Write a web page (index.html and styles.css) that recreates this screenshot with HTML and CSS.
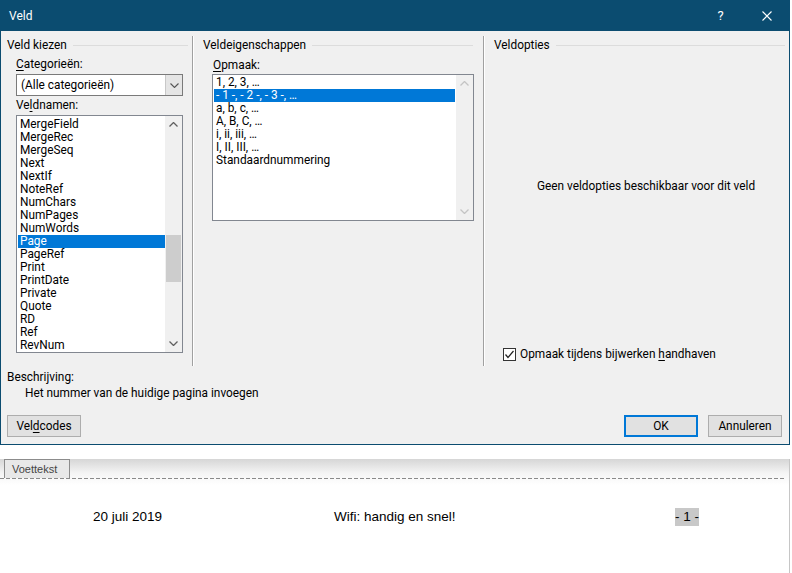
FILE: index.html
```html
<!DOCTYPE html>
<html lang="nl">
<head>
<meta charset="utf-8">
<title>Veld</title>
<link rel="stylesheet" href="styles.css">
</head>
<body>
<div class="dialog">
  <div class="titlebar">
    <span class="title">Veld</span>
    <span class="help">?</span>
    <span class="close"><svg width="10" height="10" viewBox="0 0 10 10"><path d="M0.5 0.5L9.5 9.5M9.5 0.5L0.5 9.5" stroke="#fff" stroke-width="1.1" fill="none"/></svg></span>
  </div>
  <div class="body">
    <div class="cols">
      <section class="col col1">
        <div class="group-title"><span>Veld kiezen</span></div>
        <div class="label lab-cat"><u>C</u>ategorieën:</div>
        <div class="combo">
          <span class="combo-text">(Alle categorieën)</span>
          <span class="combo-btn"><svg width="9" height="5" viewBox="0 0 9 5"><polyline points="0.5,0.5 4.5,4.5 8.5,0.5" fill="none" stroke="#555" stroke-width="1.1"/></svg></span>
        </div>
        <div class="label lab-names">Ve<u>l</u>dnamen:</div>
        <div class="listbox names">
          <div class="items">
            <div class="item">MergeField</div>
            <div class="item">MergeRec</div>
            <div class="item">MergeSeq</div>
            <div class="item">Next</div>
            <div class="item">NextIf</div>
            <div class="item">NoteRef</div>
            <div class="item">NumChars</div>
            <div class="item">NumPages</div>
            <div class="item">NumWords</div>
            <div class="item sel">Page</div>
            <div class="item">PageRef</div>
            <div class="item">Print</div>
            <div class="item">PrintDate</div>
            <div class="item">Private</div>
            <div class="item">Quote</div>
            <div class="item">RD</div>
            <div class="item">Ref</div>
            <div class="item">RevNum</div>
          </div>
          <div class="scrollbar">
            <span class="arrow"><svg width="9" height="5" viewBox="0 0 9 5"><polyline points="0.5,4.5 4.5,0.5 8.5,4.5" fill="none" stroke="#606060" stroke-width="1.3"/></svg></span>
            <span class="thumb"></span>
            <span class="arrow bottom"><svg width="9" height="5" viewBox="0 0 9 5"><polyline points="0.5,0.5 4.5,4.5 8.5,0.5" fill="none" stroke="#606060" stroke-width="1.3"/></svg></span>
          </div>
        </div>
      </section>
      <section class="col col2">
        <div class="group-title"><span>Veldeigenschappen</span></div>
        <div class="label lab-fmt"><u>O</u>pmaak:</div>
        <div class="listbox formats">
          <div class="items">
            <div class="item">1, 2, 3, …</div>
            <div class="item sel">- 1 -, - 2 -, - 3 -, …</div>
            <div class="item">a, b, c, …</div>
            <div class="item">A, B, C, …</div>
            <div class="item">i, ii, iii, …</div>
            <div class="item">I, II, III, …</div>
            <div class="item">Standaardnummering</div>
          </div>
          <div class="scrollbar disabled">
            <span class="arrow"><svg width="9" height="5" viewBox="0 0 9 5"><polyline points="0.5,4.5 4.5,0.5 8.5,4.5" fill="none" stroke="#c4c4c4" stroke-width="1.3"/></svg></span>
            <span class="arrow bottom"><svg width="9" height="5" viewBox="0 0 9 5"><polyline points="0.5,0.5 4.5,4.5 8.5,0.5" fill="none" stroke="#c4c4c4" stroke-width="1.3"/></svg></span>
          </div>
        </div>
      </section>
      <section class="col col3">
        <div class="group-title"><span>Veldopties</span></div>
        <div class="msg">Geen veldopties beschikbaar voor dit veld</div>
        <label class="check-row">
          <span class="checkbox"><svg width="11" height="11" viewBox="0 0 11 11"><polyline points="1.5,5.5 4,8.5 9.5,2" fill="none" stroke="#222" stroke-width="1.2"/></svg></span>
          <span>Opmaak tijdens bijwerken <u>h</u>andhaven</span>
        </label>
      </section>
    </div>
    <div class="desc">
      <div class="line">Beschrijving:</div>
      <div class="line indent">Het nummer van de huidige pagina invoegen</div>
    </div>
    <div class="buttons">
      <span class="btn">Vel<u>d</u>codes</span>
      <span class="spacer"></span>
      <span class="btn default">OK</span>
      <span class="btn">Annuleren</span>
    </div>
  </div>
</div>
<div class="doc">
  <div class="tab">Voettekst</div>
  <div class="dash"></div>
  <div class="footer">
    <span>20 juli 2019</span>
    <span>Wifi: handig en snel!</span>
    <span><span class="field">- 1 -</span></span>
  </div>
</div>
</body>
</html>
```

FILE: styles.css
```css
* { box-sizing: border-box; }
html, body { margin: 0; padding: 0; }
body {
  width: 792px;
  height: 573px;
  overflow: hidden;
  background: #fff;
  font-family: Roboto, "Segoe UI", "Noto Sans", sans-serif;
  font-size: 11.85px;
  color: #000;
}
u { text-decoration: underline; text-underline-offset: 2px; }

.dialog {
  width: 790px;
  height: 445px;
  border: 1px solid #0b4c70;
  border-top: 0;
  background: #f0f0f0;
  display: flex;
  flex-direction: column;
}
.titlebar {
  height: 31px;
  flex: none;
  background: #0b4c70;
  color: #fff;
  display: flex;
  align-items: center;
  font-size: 12px;
}
.title { flex: 1; padding-left: 8px; }
.help { width: 46px; text-align: center; font-size: 13px; padding-right: 3px; }
.close { width: 44px; display: flex; justify-content: center; align-items: center; }

.body { flex: 1; display: flex; flex-direction: column; }
.cols { display: flex; height: 330px; margin-top: 5px; flex: none; }
.col { display: flex; flex-direction: column; }
.col1 { width: 192px; border-right: 1px solid #a0a0a0; padding: 0 4px 0 6px; }
.col2 { width: 291px; border-left: 1px solid #fff; border-right: 1px solid #a0a0a0; padding: 0 10px 0 9px; }
.col3 { flex: 1; border-left: 1px solid #fff; padding: 0 4px 0 9px; }

.group-title {
  display: flex;
  align-items: center;
  height: 16px;
  margin-top: 1px;
  white-space: nowrap;
}
.group-title::after {
  content: "";
  flex: 1;
  height: 1px;
  background: #dcdcdc;
  margin-left: 6px;
}
.label { height: 16px; line-height: 16px; white-space: nowrap; }
.lab-cat { margin: 3px 0 0 9px; }
.lab-names { margin: 1px 0 0 9px; }
.lab-fmt { margin: 4px 0 0 10px; }

.combo {
  width: 167px;
  height: 22px;
  margin: 2px 0 0 9px;
  border: 1px solid #7a7a7a;
  background: #fff;
  display: flex;
}
.combo-text { flex: 1; padding-left: 4px; line-height: 20px; }
.combo-btn {
  width: 17px;
  background: #e5e5e5;
  border-left: 1px solid #c8c8c8;
  display: flex;
  align-items: center;
  justify-content: center;
}

.listbox {
  background: #fff;
  border: 1px solid #828790;
  display: flex;
}
.names { width: 167px; height: 238px; margin: 2px 0 0 9px; }
.formats { width: 262px; height: 147px; margin: 1px 0 0 9px; }
.items { flex: 1; overflow: hidden; padding: 2px 0 0 1px; }
.formats .items { padding: 1px 1px 0 1px; }
.item { height: 13px; line-height: 13px; padding-left: 2px; white-space: nowrap; }
.item.sel { background: #0078d7; color: #fff; }

.scrollbar {
  width: 17px;
  background: #f0f0f0;
  display: flex;
  flex-direction: column;
  align-items: center;
}
.arrow {
  width: 17px;
  height: 17px;
  display: flex;
  align-items: center;
  justify-content: center;
  flex: none;
}
.arrow.bottom { margin-top: auto; }
.thumb {
  width: 15px;
  height: 47px;
  margin-top: 102px;
  background: #cdcdcd;
}

.msg {
  margin-top: 125px;
  line-height: 16px;
  text-align: center;
  padding-left: 13px;
  white-space: nowrap;
}
.check-row {
  margin: 152px 0 0 9px;
  display: flex;
  align-items: center;
  gap: 4px;
  height: 16px;
  white-space: nowrap;
}
.checkbox {
  width: 13px;
  height: 13px;
  border: 1px solid #333;
  background: #fff;
  display: flex;
  align-items: center;
  justify-content: center;
}

.desc { margin-top: 3px; padding-left: 6px; }
.desc .line { line-height: 16px; height: 16px; }
.desc .indent { padding-left: 18px; }

.buttons {
  margin-top: 14px;
  display: flex;
  gap: 10px;
  padding: 0 7px 0 6px;
}
.spacer { flex: 1; }
.btn {
  width: 74px;
  height: 22px;
  background: #e1e1e1;
  border: 1px solid #adadad;
  display: flex;
  align-items: center;
  justify-content: center;
}
.btn.default { border: 2px solid #0078d7; }

.doc {
  width: 790px;
  height: 128px;
  border-right: 1px solid #c6c6c6;
  border-bottom: 1px solid #c6c6c6;
  background: linear-gradient(#d6d6d6, #f4f4f4 14px, #fff 26px);
  font-family: "Liberation Sans", Arial, sans-serif;
}
.tab {
  width: 66px;
  height: 19px;
  margin: 14px 0 0 4px;
  border: 1px solid #8c8c8c;
  border-bottom: 0;
  background: #e8e8e8;
  color: #444;
  font-size: 11px;
  line-height: 18px;
  padding-left: 7px;
}
.dash {
  height: 1px;
  width: 786px;
  background: repeating-linear-gradient(90deg, #8a8a8a 0 4px, transparent 4px 6px);
}
.footer {
  margin-top: 29px;
  padding-left: 93px;
  display: grid;
  grid-template-columns: 241px 341px auto;
  font-size: 13.5px;
  line-height: 18px;
  color: #000;
}
.field { background: #c8c8c8; display: inline-block; }
```
